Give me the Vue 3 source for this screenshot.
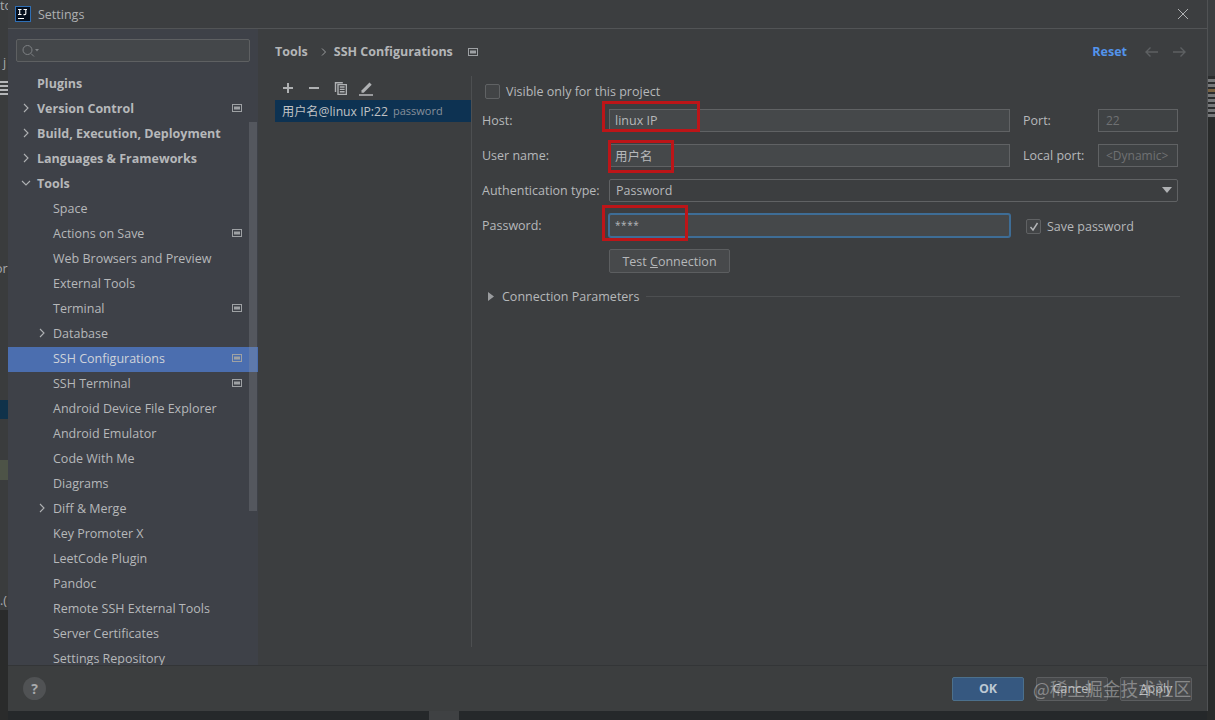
<template>
  <div class="screen">
    <div class="ide-left">
      <span class="frag frag-to">to</span>
      <span class="frag frag-j">j</span>
      <span class="frag frag-icon"></span>
      <span class="frag frag-or">or</span>
      <span class="frag frag-dot">.(</span>
      <div class="band-a"></div>
      <div class="band-blue"></div>
      <div class="band-a2"></div>
      <div class="band-green"></div>
      <div class="band-a3"></div>
      <div class="band-dark"></div>
    </div>

    <div class="dialog">
      <div class="titlebar">
        <svg class="logo" width="16" height="16" viewBox="0 0 16 16">
          <rect x="0.5" y="0.5" width="15" height="15" fill="#06101e" stroke="#2f6fb5" />
          <path d="M3 3.5h3.5M4.7 3.5v5M3 8.5h3.5M8.5 3.5h3.5M10.8 3.5v4.2q0 .9-1 .9h-1.3M3 12.5h6" stroke="#fff" stroke-width="1.1" fill="none" />
        </svg>
        <span class="title">Settings</span>
        <svg class="close" width="12" height="12" viewBox="0 0 12 12">
          <path d="M1 1l10 10M11 1L1 11" stroke="#afb1b3" stroke-width="1" fill="none" />
        </svg>
      </div>

      <div class="body">
        <aside class="sidebar">
          <div class="search">
            <svg width="20" height="14" viewBox="0 0 20 14">
              <circle cx="6.5" cy="6" r="4.5" stroke="#7f8285" fill="none" />
              <path d="M10 9.5l3 3" stroke="#7f8285" fill="none" />
              <path d="M14 5h4l-2 2.5z" fill="#7f8285" />
            </svg>
          </div>
          <div class="tree">
            <div
              v-for="item in treeItems"
              :key="item.label"
              class="row"
              :class="{ selected: item.selected, bold: item.bold, sub: !item.bold }"
            >
              <svg v-if="item.arrow" class="arrow" width="10" height="10" viewBox="0 0 10 10">
                <path v-if="item.arrow === 'right'" d="M3 1l4 4-4 4" stroke="#afb1b3" stroke-width="1.1" fill="none" />
                <path v-else d="M1 3l4 4 4-4" stroke="#afb1b3" stroke-width="1.1" fill="none" />
              </svg>
              <span class="row-label">{{ item.label }}</span>
              <svg v-if="item.badge" class="badge" width="10" height="8" viewBox="0 0 10 8">
                <rect x="0.5" y="0.5" width="9" height="7" fill="none" stroke="#9ea1a4" />
                <rect x="2" y="2.5" width="6" height="3" fill="#9ea1a4" />
              </svg>
            </div>
          </div>
          <div class="scrollbar"></div>
        </aside>

        <main class="content">
          <div class="crumbs">
            <span class="crumb">Tools</span>
            <svg class="crumb-sep" width="6" height="8" viewBox="0 0 6 8">
              <path d="M1 .5L4.5 4 1 7.5" stroke="#9a9c9e" fill="none" />
            </svg>
            <span class="crumb">SSH Configurations</span>
            <svg class="crumb-badge" width="10" height="8" viewBox="0 0 10 8">
              <rect x="0.5" y="0.5" width="9" height="7" fill="none" stroke="#9ea1a4" />
              <rect x="2" y="2.5" width="6" height="3" fill="#9ea1a4" />
            </svg>
            <span class="reset">Reset</span>
            <svg class="nav" width="16" height="12" viewBox="0 0 16 12">
              <path d="M14 6H2M6.5 1.5L2 6l4.5 4.5" stroke="#5d6062" stroke-width="1.4" fill="none" />
            </svg>
            <svg class="nav nav-next" width="16" height="12" viewBox="0 0 16 12">
              <path d="M2 6h12M9.5 1.5L14 6l-4.5 4.5" stroke="#5d6062" stroke-width="1.4" fill="none" />
            </svg>
          </div>

          <div class="split">
            <div class="configs">
              <div class="toolbar">
                <svg width="12" height="12" viewBox="0 0 12 12">
                  <path d="M6 1v10M1 6h10" stroke="#afb1b3" stroke-width="2" />
                </svg>
                <svg width="12" height="12" viewBox="0 0 12 12">
                  <path d="M1 6h10" stroke="#afb1b3" stroke-width="2" />
                </svg>
                <svg width="13" height="14" viewBox="0 0 13 14">
                  <path d="M.8 1h8v1.4H2.2V11H.8z" fill="#afb1b3" />
                  <path d="M4 3.6h8.4V13.4H4zM5.8 6h4.8M5.8 8.4h4.8M5.8 10.8h4.8" fill="none" stroke="#afb1b3" stroke-width="1.4" />
                </svg>
                <svg class="pencil" width="16" height="15" viewBox="0 0 16 15">
                  <path d="M3.5 9.5L11.5 1.5l2.2 2.2-8 8H3.5z" fill="#afb1b3" />
                  <path d="M1 14h14" stroke="#afb1b3" stroke-width="1.6" />
                </svg>
              </div>
              <div class="config-row">
                <span>用户名@linux IP:22</span>
                <span class="config-auth">password</span>
              </div>
            </div>

            <div class="form-pane">
              <label class="check check-top">
                <span class="box"></span>
                <span>Visible only for this project</span>
              </label>

              <div class="form">
                <span class="lbl">Host:</span>
                <div class="field">linux IP</div>
                <span class="lbl lbl-side">Port:</span>
                <div class="field disabled">22</div>

                <span class="lbl">User name:</span>
                <div class="field">用户名</div>
                <span class="lbl lbl-side">Local port:</span>
                <div class="field disabled">&lt;Dynamic&gt;</div>

                <span class="lbl">Authentication type:</span>
                <div class="field select">
                  <span>Password</span>
                  <svg width="10" height="6" viewBox="0 0 10 6"><path d="M0 0h10L5 6z" fill="#afb1b3" /></svg>
                </div>

                <span class="lbl">Password:</span>
                <div class="field focused"><span class="stars">****</span></div>
                <label class="check check-save">
                  <span class="box checked">
                    <svg width="12" height="12" viewBox="0 0 12 12">
                      <path d="M2.5 6l2.5 3 4.5-7" stroke="#b5b7b9" stroke-width="1.4" fill="none" />
                    </svg>
                  </span>
                  <span>Save password</span>
                </label>

                <span></span>
                <div class="test-wrap">
                  <button class="btn test">Test <u>C</u>onnection</button>
                </div>
              </div>

              <div class="params">
                <svg width="6" height="9" viewBox="0 0 6 9"><path d="M0 0l6 4.5L0 9z" fill="#9a9c9e" /></svg>
                <span>Connection Parameters</span>
                <div class="params-line"></div>
              </div>
            </div>
          </div>
        </main>
      </div>

      <div class="footer">
        <div class="help">?</div>
        <div class="buttons">
          <button class="btn ok">OK</button>
          <button class="btn">Cancel</button>
          <button class="btn"><u>A</u>pply</button>
        </div>
      </div>

      <!-- annotations drawn over the screenshot -->
      <div class="mark mark-host"></div>
      <div class="mark mark-user"></div>
      <div class="mark mark-pass"></div>
      <div class="watermark">@稀土掘金技术社区</div>
    </div>

    <div class="ide-right">
      <div class="r-top"></div>
      <div class="r-lines">
        <i></i><i></i><i class="orange"></i><i></i><i></i><i></i><i></i><i></i>
      </div>
      <div class="r-dark"></div>
    </div>

    <div class="ide-bottom"><span class="patch"></span></div>
  </div>
</template>

<script setup>
const treeItems = [
  { label: 'Plugins', bold: true },
  { label: 'Version Control', bold: true, arrow: 'right', badge: true },
  { label: 'Build, Execution, Deployment', bold: true, arrow: 'right' },
  { label: 'Languages & Frameworks', bold: true, arrow: 'right' },
  { label: 'Tools', bold: true, arrow: 'down' },
  { label: 'Space' },
  { label: 'Actions on Save', badge: true },
  { label: 'Web Browsers and Preview' },
  { label: 'External Tools' },
  { label: 'Terminal', badge: true },
  { label: 'Database', arrow: 'right' },
  { label: 'SSH Configurations', badge: true, selected: true },
  { label: 'SSH Terminal', badge: true },
  { label: 'Android Device File Explorer' },
  { label: 'Android Emulator' },
  { label: 'Code With Me' },
  { label: 'Diagrams' },
  { label: 'Diff & Merge', arrow: 'right' },
  { label: 'Key Promoter X' },
  { label: 'LeetCode Plugin' },
  { label: 'Pandoc' },
  { label: 'Remote SSH External Tools' },
  { label: 'Server Certificates' },
  { label: 'Settings Repository' }
]
</script>

<style>
html, body {
  margin: 0;
  background: #26282a;
}
</style>

<style scoped>
.screen {
  position: relative;
  width: 1215px;
  height: 720px;
  display: flex;
  overflow: hidden;
  font-family: "Open Sans", "Noto Sans CJK SC", sans-serif;
  font-size: 12.5px;
  color: #b6b8ba;
  background: #26282a;
}

.ide-left {
  position: relative;
  width: 8px;
  height: 720px;
  flex: none;
  display: flex;
  flex-direction: column;
  overflow: hidden;
}
.band-a { height: 400px; background: #3a3c3d; }
.band-blue { height: 19px; background: #10324a; }
.band-a2 { height: 41px; background: #3a3c3d; }
.band-green { height: 20px; background: #4d5347; }
.band-a3 { height: 130px; background: #3a3c3d; }
.band-dark { flex: 1; background: #2a2b2b; }
.frag {
  position: absolute;
  left: 0;
  color: #a9abad;
  line-height: 14px;
}
.frag-to { top: -1px; }
.frag-j { top: 56px; left: 3px; }
.frag-icon {
  top: 81px;
  width: 8px;
  height: 14px;
  background: repeating-linear-gradient(#b4b6b8 0 2px, #3a3c3d 2px 4px);
}
.frag-or { top: 262px; left: -5px; }
.frag-dot { top: 594px; left: 0; }

.dialog {
  position: relative;
  width: 1199px;
  height: 711px;
  flex: none;
  display: flex;
  flex-direction: column;
  background: #3c3e40;
  box-shadow: 1px 0 0 #505254;
}

.titlebar {
  flex: none;
  display: flex;
  align-items: center;
  padding: 0 18px 0 7px;
  border-bottom: 1px solid #525456;
  box-sizing: border-box;
  height: 29px;
}
.logo { flex: none; }
.title { margin-left: 7px; color: #aeb0b2; }
.close { margin-left: auto; }

.body {
  flex: 1;
  min-height: 0;
  display: flex;
}

.sidebar {
  position: relative;
  width: 250px;
  flex: none;
  background: #3e4148;
  overflow: hidden;
}
.search {
  height: 23px;
  width: 234px;
  margin: 10px 0 0 8px;
  display: flex;
  align-items: center;
  padding-left: 4px;
  box-sizing: border-box;
  border: 1px solid #5e6062;
  border-radius: 2px;
  background: #44474a;
}
.tree { margin-top: 10px; }
.row {
  position: relative;
  height: 25px;
  display: flex;
  align-items: center;
  padding: 0 0 2px 29px;
  box-sizing: border-box;
  white-space: nowrap;
}
.row.sub { padding-left: 45px; }
.row.bold { font-weight: 700; color: #b6b8ba; }
.row.selected { background: #4b6eaf; color: #cfd3da; }
.arrow {
  position: absolute;
  left: 13px;
  top: 6px;
}
.row.sub .arrow { left: 29px; }
.badge {
  position: absolute;
  left: 224px;
  top: 7px;
}
.scrollbar {
  position: absolute;
  left: 241px;
  top: 93px;
  width: 8px;
  height: 389px;
  background: rgba(150, 155, 160, 0.25);
}

.content {
  flex: 1;
  min-width: 0;
  display: flex;
  flex-direction: column;
}
.crumbs {
  height: 45px;
  margin-bottom: 2px;
  flex: none;
  display: flex;
  align-items: center;
  padding: 0 20px 0 17px;
  box-sizing: border-box;
  font-weight: 700;
  color: #b4b6b8;
}
.crumb-sep { margin: 0 7px 0 13px; }
.crumb-badge { margin-left: 15px; }
.reset { margin-left: auto; color: #5394ec; }
.nav { margin-left: 17px; }
.nav-next { margin-left: 11px; }

.split {
  flex: 1;
  min-height: 0;
  display: flex;
  margin-bottom: 18px;
}
.configs {
  width: 196px;
  flex: none;
  margin-left: 17px;
}
.toolbar {
  height: 24px;
  display: flex;
  align-items: center;
  gap: 14px;
  padding-left: 7px;
}
.pencil { margin-left: -3px; }
.config-row {
  height: 22px;
  display: flex;
  align-items: center;
  padding: 0 0 1px 7px;
  box-sizing: border-box;
  background: #0d3252;
  color: #c0c2c4;
  font-size: 12.2px;
  white-space: nowrap;
}
.config-auth { margin-left: 5px; color: #87909a; font-size: 11px; }

.form-pane {
  flex: 1;
  min-width: 0;
  border-left: 1px solid #4d4f51;
  padding: 5px 27px 0 10px;
}
.check {
  display: flex;
  align-items: center;
  gap: 6px;
}
.check-top { height: 20px; margin-left: 3px; }
.box {
  width: 13px;
  height: 13px;
  flex: none;
  display: flex;
  align-items: center;
  justify-content: center;
  border: 1px solid #606264;
  border-radius: 2px;
  background: #424446;
}
.form {
  display: grid;
  grid-template-columns: 127px 401px 88px 80px;
  grid-auto-rows: 23px;
  row-gap: 12px;
  margin-top: 8px;
  align-items: center;
}
.lbl { padding-bottom: 1px; white-space: nowrap; }
.lbl-side { padding-left: 13px; }
.field {
  height: 23px;
  box-sizing: border-box;
  display: flex;
  align-items: center;
  padding: 0 0 1px 5px;
  border: 1px solid #606264;
  background: #45484a;
  white-space: nowrap;
}
.field.disabled {
  background: #3f4244;
  color: #6f7173;
  padding-left: 7px;
  font-size: 12px;
}
.field.select {
  grid-column: 2 / 5;
  justify-content: space-between;
  padding: 0 5px 1px 6px;
  background: #3c3e40;
  border-radius: 2px;
}
.field.focused {
  border-color: #3e6d96;
  box-shadow: 0 0 0 1px #3e6d96;
  border-radius: 2px;
  padding-left: 5px;
}
.stars {
  font-size: 10px;
  letter-spacing: 0.6px;
  line-height: 10px;
}
.check-save {
  grid-column: 3 / 5;
  margin-left: 16px;
  padding-top: 2px;
}
.test-wrap {
  grid-column: 2 / 5;
  height: 23px;
}
.btn {
  height: 24px;
  box-sizing: border-box;
  font: inherit;
  color: #b6b8ba;
  background: #47494b;
  border: 1px solid #5c5e60;
  border-radius: 2px;
  padding: 0;
  width: 72px;
}
.btn.test { width: 121px; display: block; }
.params {
  display: flex;
  align-items: center;
  height: 18px;
  margin-top: 15px;
  padding-left: 6px;
}
.params span { margin-left: 8px; white-space: nowrap; }
.params-line {
  flex: 1;
  height: 1px;
  margin-left: 7px;
  background: #4d4f51;
}

.footer {
  height: 46px;
  flex: none;
  display: flex;
  align-items: center;
  justify-content: space-between;
  padding: 0 15px;
  border-top: 1px solid #333537;
  box-sizing: border-box;
  background: #3c3e3f;
}
.help {
  width: 23px;
  height: 23px;
  border-radius: 50%;
  background: #505254;
  color: #a8aaac;
  font-weight: 700;
  font-size: 14px;
  line-height: 23px;
  text-align: center;
}
.buttons {
  display: flex;
  gap: 12px;
}
.btn.ok {
  background: #365880;
  border-color: #4c708c;
  color: #bcc8d3;
  font-weight: 700;
}

.mark {
  position: absolute;
  box-sizing: border-box;
  border: 3px solid #bd1518;
}
.mark-host { left: 594px; top: 101px; width: 98px; height: 31px; }
.mark-user { left: 600px; top: 140px; width: 66px; height: 33px; }
.mark-pass { left: 594px; top: 205px; width: 86px; height: 36px; }

.watermark {
  position: absolute;
  left: 1025px;
  top: 675px;
  font-family: "Noto Sans CJK SC", sans-serif;
  font-size: 17.7px;
  line-height: 26px;
  color: rgba(230, 230, 230, 0.42);
  white-space: nowrap;
}

.ide-right {
  width: 8px;
  height: 720px;
  flex: none;
  display: flex;
  flex-direction: column;
}
.r-top { height: 76px; background: #3c3f41; }
.r-lines {
  height: 42px;
  display: flex;
  flex-direction: column;
  gap: 2px;
  padding-top: 3px;
  box-sizing: border-box;
  background: #2b2d2e;
}
.r-lines i { display: block; height: 3px; background: #77797b; }
.r-lines i.orange { background: #7a6444; }
.r-dark { flex: 1; background: #292b2b; }

.ide-bottom {
  position: absolute;
  left: 8px;
  right: 8px;
  top: 711px;
  height: 9px;
  background: #25282a;
}
.patch {
  position: absolute;
  left: 421px;
  top: 0;
  width: 30px;
  height: 9px;
  background: #3f4143;
}
</style>
